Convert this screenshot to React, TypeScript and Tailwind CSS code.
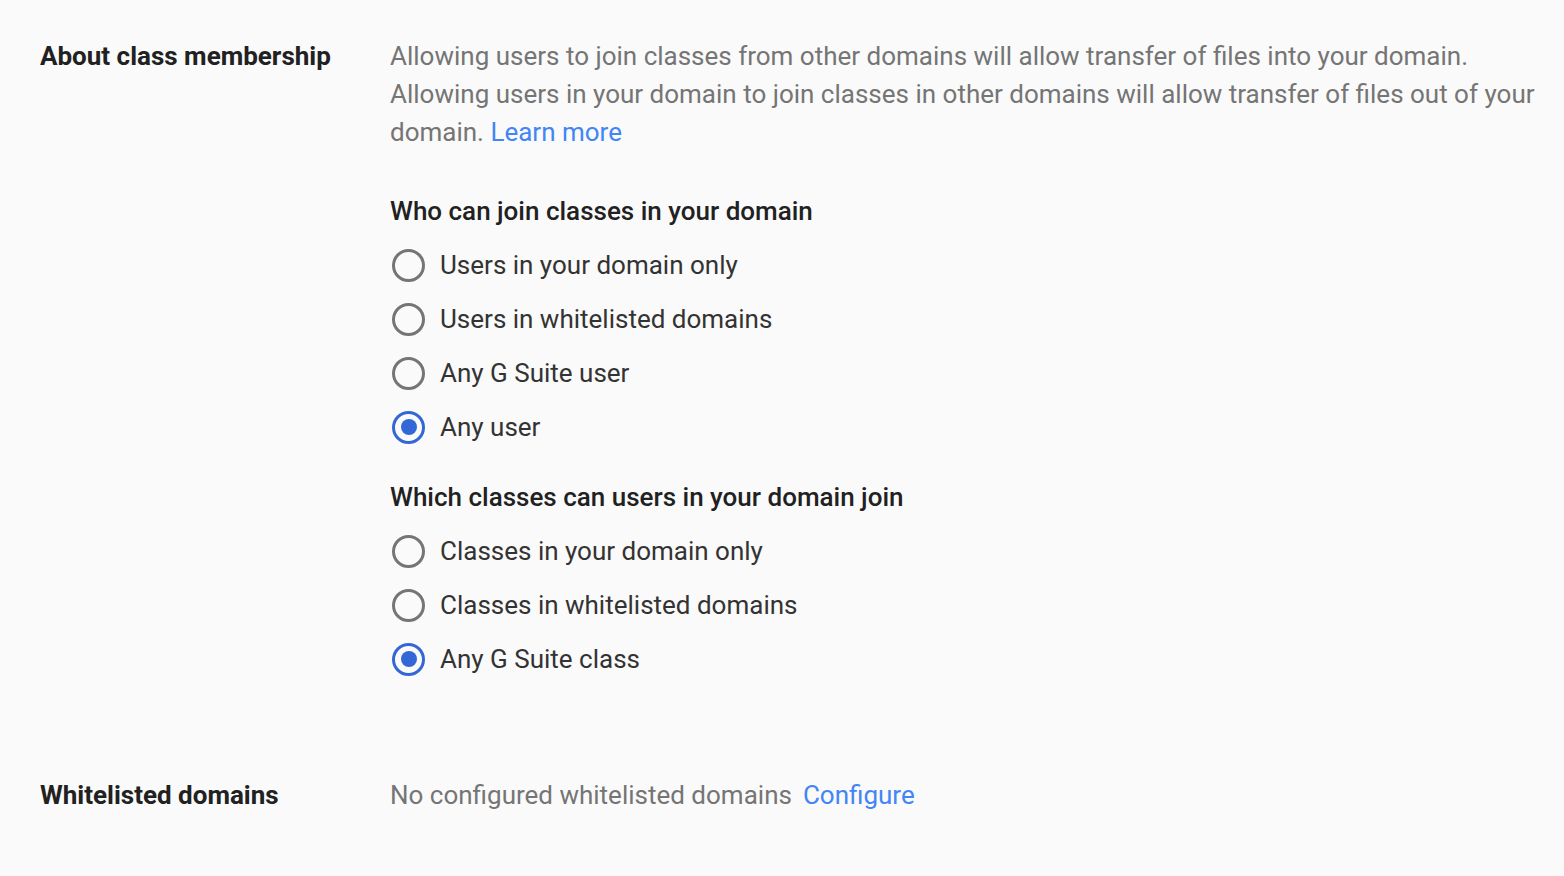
import React, { useState } from 'react';

type Option = { id: string; label: string };

const whoOptions: Option[] = [
  { id: 'domain', label: 'Users in your domain only' },
  { id: 'whitelisted', label: 'Users in whitelisted domains' },
  { id: 'gsuite', label: 'Any G Suite user' },
  { id: 'any', label: 'Any user' },
];

const whichOptions: Option[] = [
  { id: 'domain', label: 'Classes in your domain only' },
  { id: 'whitelisted', label: 'Classes in whitelisted domains' },
  { id: 'gsuite', label: 'Any G Suite class' },
];

function Radio({ checked }: { checked: boolean }) {
  return (
    <span
      className={
        'flex h-[33px] w-[33px] items-center justify-center rounded-full border-[3px] ' +
        (checked ? 'border-[#3367d6]' : 'border-[#757575]')
      }
    >
      {checked && <span className="h-[16px] w-[16px] rounded-full bg-[#3367d6]" />}
    </span>
  );
}

function RadioGroup({
  title,
  options,
  value,
  onChange,
}: {
  title: string;
  options: Option[];
  value: string;
  onChange: (v: string) => void;
}) {
  return (
    <div>
      <h3 className="text-[26px] leading-[38px] font-medium text-[#212121]">{title}</h3>
      <div className="mt-2">
        {options.map((o) => (
          <button
            key={o.id}
            onClick={() => onChange(o.id)}
            className="flex h-[54px] items-center gap-[15px] pl-[2px] text-left"
          >
            <Radio checked={value === o.id} />
            <span className="text-[26px] text-[#333333]">{o.label}</span>
          </button>
        ))}
      </div>
    </div>
  );
}

export default function App() {
  const [who, setWho] = useState('any');
  const [which, setWhich] = useState('gsuite');

  return (
    <div className="min-h-screen bg-[#fafafa] font-['Roboto',sans-serif]">
      <div className="flex pl-[40px] pr-[24px] pt-[37px]">
        <div className="w-[350px] shrink-0 text-[26px] leading-[38px] font-bold text-[#212121]">
          About class membership
        </div>
        <div className="flex-1">
          <p className="text-[26px] leading-[38px] text-[#757575]">
            Allowing users to join classes from other domains will allow transfer of files into your domain.
            <br />
            Allowing users in your domain to join classes in other domains will allow transfer of files out of your
            domain. <a href="#" className="text-[#4285f4]">Learn more</a>
          </p>
          <div className="mt-[41px]">
            <RadioGroup title="Who can join classes in your domain" options={whoOptions} value={who} onChange={setWho} />
          </div>
          <div className="mt-[24px]">
            <RadioGroup
              title="Which classes can users in your domain join"
              options={whichOptions}
              value={which}
              onChange={setWhich}
            />
          </div>
        </div>
      </div>
      <div className="mt-[90px] flex pl-[40px]">
        <div className="w-[350px] shrink-0 text-[26px] leading-[38px] font-bold text-[#212121]">
          Whitelisted domains
        </div>
        <div className="flex gap-[11px] text-[26px] leading-[38px] text-[#757575]">
          <span>No configured whitelisted domains</span>
          <a href="#" className="text-[#4285f4]">
            Configure
          </a>
        </div>
      </div>
    </div>
  );
}
